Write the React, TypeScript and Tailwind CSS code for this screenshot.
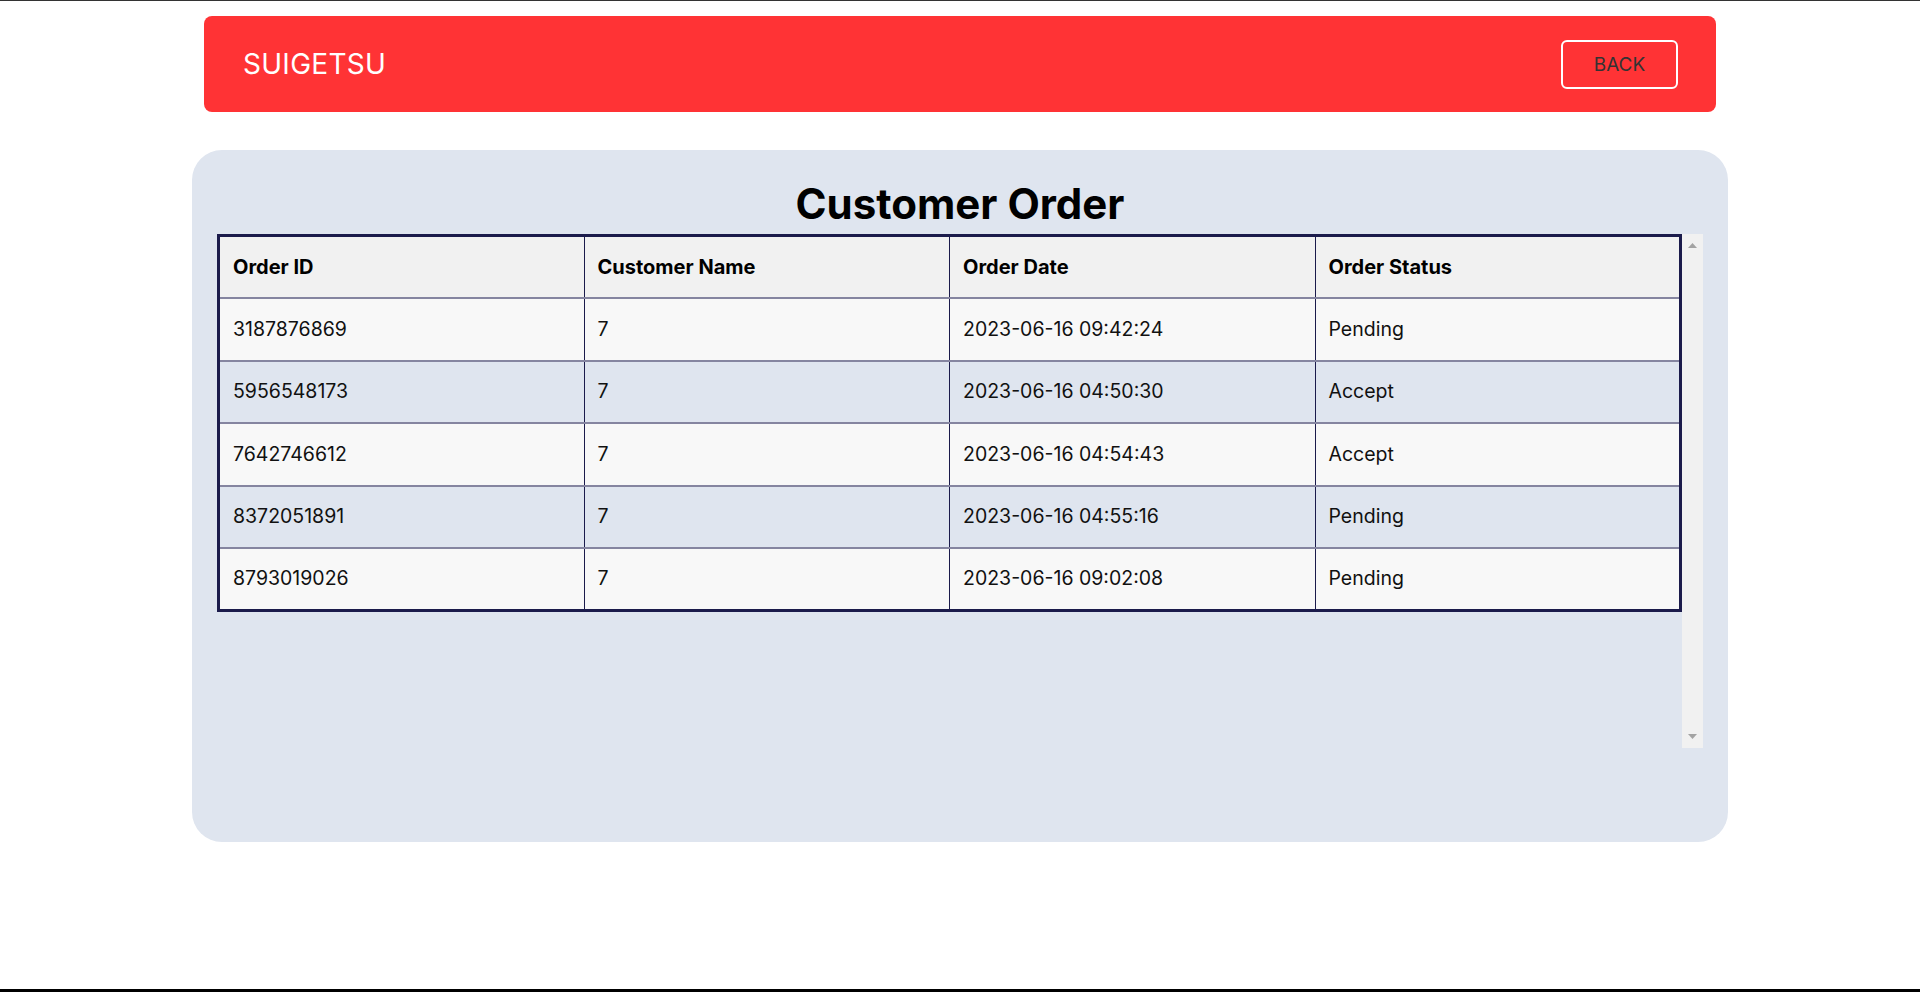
import React from 'react';

const ORDERS = [
  { id: '3187876869', customer: '7', date: '2023-06-16 09:42:24', status: 'Pending' },
  { id: '5956548173', customer: '7', date: '2023-06-16 04:50:30', status: 'Accept' },
  { id: '7642746612', customer: '7', date: '2023-06-16 04:54:43', status: 'Accept' },
  { id: '8372051891', customer: '7', date: '2023-06-16 04:55:16', status: 'Pending' },
  { id: '8793019026', customer: '7', date: '2023-06-16 09:02:08', status: 'Pending' },
];

const COLUMNS = ['Order ID', 'Customer Name', 'Order Date', 'Order Status'];

export default function App() {
  return (
    <div className="min-h-[992px] flex flex-col bg-white border-t border-[#333333] font-['Inter','Liberation_Sans',sans-serif]">
      {/* Top bar */}
      <header className="mt-[15px] mx-auto w-[1512px] h-[96px] bg-[#ff3335] rounded-[8px] flex items-center justify-between pl-[39px] pr-[38px]">
        <h2 className="text-white text-[28px] leading-none tracking-[0.01em]">SUIGETSU</h2>
        <button className="w-[117px] h-[49px] border-2 border-white rounded-[6px] text-[#333333] text-[19px] leading-none">
          BACK
        </button>
      </header>

      {/* Orders card */}
      <main className="mt-[38px] mx-auto w-[1536px] h-[692px] bg-[#dfe5ef] rounded-[30px] px-[25px] pt-[34px]">
        <h1 className="text-center text-[42px] leading-[40px] font-bold text-black mb-[10px]">Customer Order</h1>
        <div className="h-[514px] flex">
          <div className="flex-1 overflow-y-auto">
            <table className="w-full table-fixed border-collapse border-[3px] border-[#1b1b4b] text-[19.5px] text-[#111111]">
              <thead>
                <tr className="bg-[#f1f1f1] border-b-2 border-[#8585a0]">
                  {COLUMNS.map(col => (
                    <th key={col} className="h-[62.5px] px-[13px] text-left text-[20px] font-bold text-black border-x border-[#1b1b4b]">
                      {col}
                    </th>
                  ))}
                </tr>
              </thead>
              <tbody>
                {ORDERS.map((order, idx) => (
                  <tr key={order.id} className={`${idx % 2 === 0 ? 'bg-[#f8f8f8]' : 'bg-[#dfe5ef]'} border-b-2 border-[#8585a0]`}>
                    <td className="h-[62.5px] px-[13px] border-x border-[#1b1b4b]">{order.id}</td>
                    <td className="h-[62.5px] px-[13px] border-x border-[#1b1b4b]">{order.customer}</td>
                    <td className="h-[62.5px] px-[13px] border-x border-[#1b1b4b]">{order.date}</td>
                    <td className="h-[62.5px] px-[13px] border-x border-[#1b1b4b]">{order.status}</td>
                  </tr>
                ))}
              </tbody>
            </table>
          </div>
          {/* scrollbar track */}
          <div className="w-[21px] bg-[#f1f1f1] flex flex-col items-center justify-between py-[9px]">
            <svg width="9" height="5" viewBox="0 0 9 5"><path d="M4.5 0L9 5H0z" fill="#a3a3a3" /></svg>
            <svg width="9" height="5" viewBox="0 0 9 5"><path d="M0 0h9L4.5 5z" fill="#a3a3a3" /></svg>
          </div>
        </div>
      </main>

      <footer className="mt-auto h-[3px] bg-black" />
    </div>
  );
}
